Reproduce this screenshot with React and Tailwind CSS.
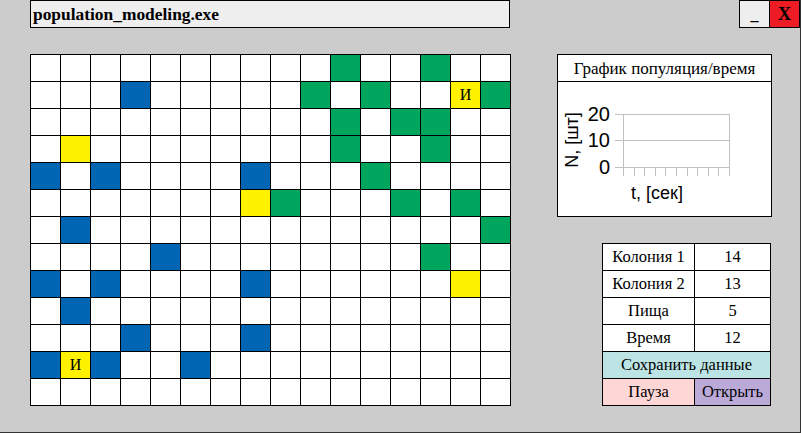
import React from "react";

const B = "b", G = "g", Y = "y", I = "i";
// 13 rows x 16 cols
const cells = {
  "0,10": G, "0,13": G,
  "1,3": B, "1,9": G, "1,11": G, "1,14": I, "1,15": G,
  "2,10": G, "2,12": G, "2,13": G,
  "3,1": Y, "3,10": G, "3,13": G,
  "4,0": B, "4,2": B, "4,7": B, "4,11": G,
  "5,7": Y, "5,8": G, "5,12": G, "5,14": G,
  "6,1": B, "6,15": G,
  "7,4": B, "7,13": G,
  "8,0": B, "8,2": B, "8,7": B, "8,14": Y,
  "9,1": B,
  "10,3": B, "10,7": B,
  "11,0": B, "11,1": I, "11,2": B, "11,5": B,
};

function Cell({ t }) {
  const cls =
    t === B ? "bg-[#0066b3]" : t === G ? "bg-[#00a65d]" : t === Y || t === I ? "bg-[#fff200]" : "bg-white";
  return (
    <div className={`${cls} flex items-center justify-center text-[16px] leading-none text-black`}>
      {t === I ? "И" : null}
    </div>
  );
}

function Chart() {
  const ticks = [];
  for (let i = 0; i <= 10; i++) ticks.push(65 + i * 10.6);
  return (
    <svg width="213" height="134" viewBox="0 0 213 134" className="block">
      <g stroke="#c0c0c0" strokeWidth="1" fill="none">
        <line x1="57" y1="32.5" x2="171" y2="32.5" />
        <line x1="57" y1="58.5" x2="171" y2="58.5" />
        <line x1="57" y1="85.5" x2="171" y2="85.5" />
        <line x1="65.5" y1="32" x2="65.5" y2="94" />
        <line x1="171.5" y1="32" x2="171.5" y2="94" />
        {ticks.map((x, i) => (
          <line key={i} x1={Math.round(x) + 0.5} y1="85" x2={Math.round(x) + 0.5} y2="94" />
        ))}
      </g>
      <g fontFamily="'Liberation Sans', Arial, sans-serif" fontSize="20" fill="#000">
        <text x="52" y="39" textAnchor="end">20</text>
        <text x="52" y="65" textAnchor="end">10</text>
        <text x="52" y="92" textAnchor="end">0</text>
      </g>
      <text
        x="0"
        y="0"
        fontFamily="'Liberation Sans', Arial, sans-serif"
        fontSize="18"
        textAnchor="middle"
        transform="translate(20 58) rotate(-90)"
      >
        N, [шт]
      </text>
      <text x="99" y="117" fontFamily="'Liberation Sans', Arial, sans-serif" fontSize="18" textAnchor="middle">
        t, [сек]
      </text>
    </svg>
  );
}

export default function App() {
  const rows = [];
  for (let r = 0; r < 13; r++)
    for (let c = 0; c < 16; c++) rows.push(<Cell key={`${r}-${c}`} t={cells[`${r},${c}`]} />);

  const serif = "font-['Liberation_Serif','Times_New_Roman',serif]";

  return (
    <div className={`w-[801px] h-[433px] bg-[#cccccc] border-r border-b border-[#333333] flex flex-col ${serif} text-black`}>
      {/* title bar */}
      <div className="flex h-[28px]">
        <div className="ml-[30px] w-[481px] h-[28px] bg-[#eeeeee] border border-black flex items-center pl-[2px]">
          <span className="font-bold text-[17.4px] leading-none pt-[1px]">population_modeling.exe</span>
        </div>
        <div className="ml-[229px] w-[31px] h-[28px] bg-[#eeeeee] border border-black flex items-end justify-center pb-[4px]">
          <span className="text-[16px] leading-none font-bold">_</span>
        </div>
        <div className="w-[30px] h-[28px] bg-[#ed1c24] border-y border-r border-black flex items-center justify-center">
          <span className="text-[18px] leading-none font-bold">X</span>
        </div>
      </div>

      <div className="flex mt-[26px]">
        {/* grid */}
        <div className="ml-[30px] grid grid-cols-[repeat(16,29px)] grid-rows-[repeat(13,26px)] gap-px p-px bg-black w-[481px] h-[352px]">
          {rows}
        </div>

        {/* right panel */}
        <div className="ml-[46px] flex flex-col">
          <div className="w-[215px] h-[163px] bg-white border border-black flex flex-col">
            <div className="h-[27px] border-b border-black flex items-center justify-center text-[17px] leading-none">
              График популяция/время
            </div>
            <Chart />
          </div>

          <div className="ml-[45px] mt-[26px] grid grid-cols-[91px_75px] grid-rows-[repeat(6,26px)] gap-px p-px bg-black w-[169px] h-[163px] text-[16.5px] leading-none">
            <div className="bg-white flex items-center justify-center">Колония 1</div>
            <div className="bg-white flex items-center justify-center">14</div>
            <div className="bg-white flex items-center justify-center">Колония 2</div>
            <div className="bg-white flex items-center justify-center">13</div>
            <div className="bg-white flex items-center justify-center">Пища</div>
            <div className="bg-white flex items-center justify-center">5</div>
            <div className="bg-white flex items-center justify-center">Время</div>
            <div className="bg-white flex items-center justify-center">12</div>
            <div className="col-span-2 bg-[#bde4e4] flex items-center justify-center">Сохранить данные</div>
            <div className="bg-[#ffd6d6] flex items-center justify-center">Пауза</div>
            <div className="bg-[#bbaad8] flex items-center justify-center">Открыть</div>
          </div>
        </div>
      </div>
    </div>
  );
}
